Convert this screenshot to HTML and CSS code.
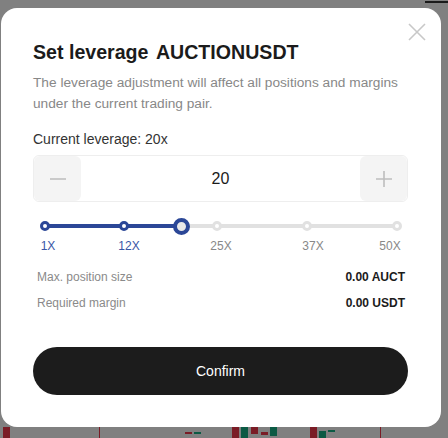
FILE: index.html
```html
<!DOCTYPE html>
<html>

<head>
  <meta name="viewport" content="width=device-width, initial-scale=1.0">
  <title>Set leverage</title>
  <link rel="stylesheet" href="styles.css">
</head>

<body>
  <!-- chart behind the overlay -->
  <div class="chart-bg">
    <span class="topline"></span>
    <span class="candle red" style="left:3px;height:12px"></span>
    <span class="wick" style="left:99px"></span>
    <span class="candle red" style="left:185px;top:5px;height:2px"></span>
    <span class="candle green" style="left:194px;top:5px;height:2px"></span>
    <span class="candle red" style="left:232px;height:11px"></span>
    <span class="candle green" style="left:241px;height:11px"></span>
    <span class="candle red" style="left:251px;height:7px"></span>
    <span class="candle red" style="left:261px;top:5px;height:3px"></span>
    <span class="candle green" style="left:270px;height:9px"></span>
    <span class="candle red" style="left:310px;height:11px"></span>
    <span class="candle green" style="left:319px;top:4px;height:7px"></span>
    <span class="candle green" style="left:328px;top:3px;height:2px"></span>
    <span class="wick" style="left:380px"></span>
  </div>

  <div class="modal">
    <button class="close" aria-label="Close">
      <svg width="18" height="18" viewBox="0 0 18 18">
        <path d="M1 1 L17 17 M17 1 L1 17" stroke="#c8c8c8" stroke-width="1.6" fill="none" />
      </svg>
    </button>

    <h2 class="title">Set leverage <span class="pair">AUCTIONUSDT</span></h2>
    <p class="desc">The leverage adjustment will affect all positions and margins under the current trading pair.</p>

    <div class="current">Current leverage: 20x</div>

    <div class="stepper">
      <button class="step">
        <svg width="18" height="18" viewBox="0 0 18 18">
          <path d="M1 9 H17" stroke="#bdbdbd" stroke-width="1.6" />
        </svg>
      </button>
      <div class="value">20</div>
      <button class="step">
        <svg width="18" height="18" viewBox="0 0 18 18">
          <path d="M1 9 H17 M9 1 V17" stroke="#bdbdbd" stroke-width="1.6" />
        </svg>
      </button>
    </div>

    <!-- slider: marks placed by value -->
    <div class="lev-slider">
      <div class="rail"></div>
      <div class="track" style="width:136px"></div>
      <span class="dot on" style="left:0px"></span>
      <span class="dot on" style="left:79px"></span>
      <span class="dot" style="left:172px"></span>
      <span class="dot" style="left:262px"></span>
      <span class="dot" style="left:352px"></span>
      <span class="thumb" style="left:136px"></span>

      <span class="mark on" style="left:3px">1X</span>
      <span class="mark on" style="left:84px">12X</span>
      <span class="mark" style="left:176px">25X</span>
      <span class="mark" style="left:268px">37X</span>
      <span class="mark" style="left:345px">50X</span>
    </div>

    <div class="info">
      <div class="info-row">
        <span>Max. position size</span>
        <b>0.00 AUCT</b>
      </div>
      <div class="info-row">
        <span>Required margin</span>
        <b>0.00 USDT</b>
      </div>
    </div>

    <button class="confirm">Confirm</button>
  </div>
</body>

</html>
```

FILE: styles.css
```css
body {
  font-family: Arial, "Liberation Sans", sans-serif;
  margin: 0;
  padding: 8px 0 0 1px;
  background-color: #808080;
  height: 438px;
  box-sizing: border-box;
  overflow: hidden;
  position: relative;
}

/* background chart pieces */
.chart-bg {
  position: absolute;
  left: 0;
  top: 427px;
  width: 448px;
  height: 11px;
}

.topline {
  position: absolute;
  left: 425px;
  top: -426px;
  width: 23px;
  height: 2px;
  background: #1a1a1a;
}

.candle {
  position: absolute;
  top: 0;
  width: 7px;
}

.candle.red {
  background: #7a1c26;
}

.candle.green {
  background: #0c5a44;
}

.wick {
  position: absolute;
  top: 0;
  width: 1px;
  height: 11px;
  background: #7a1c26;
}

.modal {
  position: relative;
  width: 440px;
  height: 419px;
  box-sizing: border-box;
  background-color: #ffffff;
  border-radius: 16px;
  padding: 30px 33px 0 32px;
}

.close {
  position: absolute;
  top: 15px;
  right: 15px;
  padding: 0;
  border: none;
  background: none;
  cursor: pointer;
  line-height: 0;
}

.title {
  margin: 0;
  font-size: 19.6px;
  line-height: 28px;
  font-weight: bold;
  color: #1b1b1b;
}

.pair {
  margin-left: 2px;
}

.desc {
  margin: 6px 0 0;
  font-size: 13.7px;
  line-height: 21px;
  color: #888888;
}

.current {
  margin-top: 15px;
  font-size: 14px;
  line-height: 20px;
  color: #333333;
}

.stepper {
  display: flex;
  align-items: stretch;
  height: 47px;
  margin-top: 6px;
  border: 1px solid #eeeeee;
  border-radius: 6px;
  box-sizing: border-box;
  overflow: hidden;
}

.step {
  width: 47px;
  border: none;
  background-color: #f4f4f4;
  border-radius: 6px;
  display: flex;
  align-items: center;
  justify-content: center;
  padding: 0;
  cursor: pointer;
}

.value {
  flex: 1;
  display: flex;
  align-items: center;
  justify-content: center;
  font-size: 16px;
  color: #1b1b1b;
}

/* Slider */
.lev-slider {
  position: relative;
  height: 52px;
  margin: 0 11px 0 12px;
}

.rail,
.track {
  position: absolute;
  top: 22px;
  left: 0;
  height: 4px;
  border-radius: 2px;
}

.rail {
  right: 0;
  background-color: #e1e1e1;
}

.track {
  background-color: #2b4797;
}

.dot {
  position: absolute;
  top: 19px;
  width: 10px;
  height: 10px;
  margin-left: -5px;
  box-sizing: border-box;
  border: 3px solid #e1e1e1;
  border-radius: 50%;
  background-color: #ffffff;
}

.dot.on {
  border-color: #2b4797;
}

.thumb {
  position: absolute;
  top: 15.5px;
  width: 17px;
  height: 17px;
  margin-left: -8.5px;
  box-sizing: border-box;
  border: 4px solid #2b4797;
  border-radius: 50%;
  background-color: #e8e8e8;
}

.mark {
  position: absolute;
  top: 37px;
  font-size: 12px;
  line-height: 14px;
  color: #888888;
  transform: translateX(-50%);
}

.mark.on {
  color: #3a56a6;
}

.info {
  margin-top: 15px;
  padding: 0 3px 0 4px;
}

.info-row {
  display: flex;
  justify-content: space-between;
  font-size: 12px;
  line-height: 16px;
  margin-bottom: 10px;
}

.info-row span {
  color: #8a8a8a;
}

.info-row b {
  color: #1b1b1b;
}

.confirm {
  display: block;
  width: 100%;
  height: 48px;
  margin-top: 36px;
  border: none;
  border-radius: 24px;
  background-color: #1c1c1c;
  color: #ffffff;
  font-family: Arial, "Liberation Sans", sans-serif;
  font-size: 14px;
  cursor: pointer;
}
```
